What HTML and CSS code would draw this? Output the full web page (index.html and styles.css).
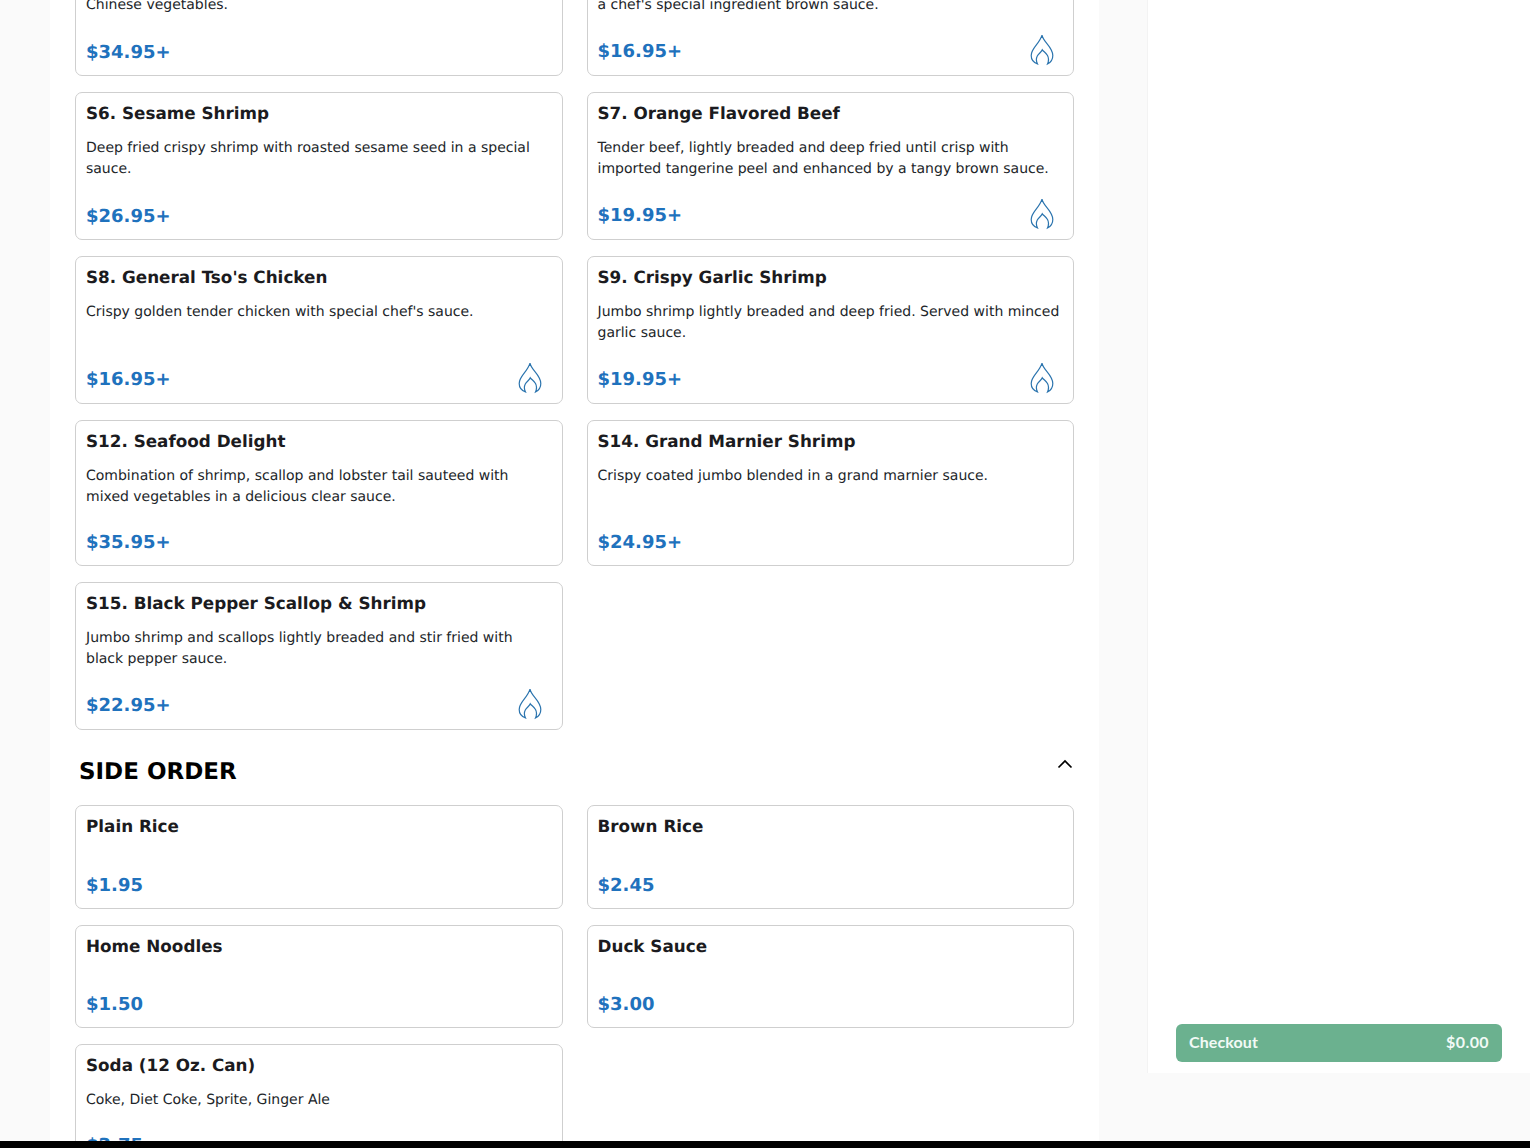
FILE: index.html
```html
<!DOCTYPE html>
<html lang="en">
<head>
<meta charset="utf-8">
<title>Menu</title>
<link rel="stylesheet" href="styles.css">
</head>
<body>
<div class="viewport">
  <main class="menu">
    <div class="menu-inner">
      <section class="grid first-grid">
        <article class="card"><h3 class="name">S4. Seafood Combination</h3><p class="desc">Shrimp, scallop and lobster meat sauteed with fresh<br>Chinese vegetables.</p><div class="price-row"><span class="price">$34.95+</span></div></article>
        <article class="card"><h3 class="name">S5. Sesame Chicken</h3><p class="desc">Crispy chicken with roasted sesame seeds, tossed in<br>a chef's special ingredient brown sauce.</p><div class="price-row"><span class="price">$16.95+</span><svg class="flame" viewBox="0 1 24 32"><use href="#flame"/></svg></div></article>
        <article class="card"><h3 class="name">S6. Sesame Shrimp</h3><p class="desc">Deep fried crispy shrimp with roasted sesame seed in a special sauce.</p><div class="price-row"><span class="price">$26.95+</span></div></article>
        <article class="card"><h3 class="name">S7. Orange Flavored Beef</h3><p class="desc">Tender beef, lightly breaded and deep fried until crisp with imported tangerine peel and enhanced by a tangy brown sauce.</p><div class="price-row"><span class="price">$19.95+</span><svg class="flame" viewBox="0 1 24 32"><use href="#flame"/></svg></div></article>
        <article class="card"><h3 class="name">S8. General Tso's Chicken</h3><p class="desc">Crispy golden tender chicken with special chef's sauce.</p><div class="price-row"><span class="price">$16.95+</span><svg class="flame" viewBox="0 1 24 32"><use href="#flame"/></svg></div></article>
        <article class="card"><h3 class="name">S9. Crispy Garlic Shrimp</h3><p class="desc">Jumbo shrimp lightly breaded and deep fried. Served with minced garlic sauce.</p><div class="price-row"><span class="price">$19.95+</span><svg class="flame" viewBox="0 1 24 32"><use href="#flame"/></svg></div></article>
        <article class="card"><h3 class="name">S12. Seafood Delight</h3><p class="desc">Combination of shrimp, scallop and lobster tail sauteed with mixed vegetables in a delicious clear sauce.</p><div class="price-row"><span class="price">$35.95+</span></div></article>
        <article class="card"><h3 class="name">S14. Grand Marnier Shrimp</h3><p class="desc">Crispy coated jumbo blended in a grand marnier sauce.</p><div class="price-row"><span class="price">$24.95+</span></div></article>
        <article class="card"><h3 class="name">S15. Black Pepper Scallop &amp; Shrimp</h3><p class="desc">Jumbo shrimp and scallops lightly breaded and stir fried with black pepper sauce.</p><div class="price-row"><span class="price">$22.95+</span><svg class="flame" viewBox="0 1 24 32"><use href="#flame"/></svg></div></article>
      </section>
      <header class="section-head">
        <h2 class="section-title">SIDE ORDER</h2>
        <svg class="chevron" viewBox="0 0 16 10"><path d="M1.5 8.5 8 2l6.500 6.500"/></svg>
      </header>
      <section class="grid">
        <article class="card"><h3 class="name">Plain Rice</h3><div class="price-row"><span class="price">$1.95</span></div></article>
        <article class="card"><h3 class="name">Brown Rice</h3><div class="price-row"><span class="price">$2.45</span></div></article>
        <article class="card"><h3 class="name">Home Noodles</h3><div class="price-row"><span class="price">$1.50</span></div></article>
        <article class="card"><h3 class="name">Duck Sauce</h3><div class="price-row"><span class="price">$3.00</span></div></article>
        <article class="card"><h3 class="name">Soda (12 Oz. Can)</h3><p class="desc">Coke, Diet Coke, Sprite, Ginger Ale</p><div class="price-row"><span class="price">$2.75</span></div></article>
      </section>
    </div>
  </main>
  <aside class="cart">
    <button class="checkout" type="button"><span>Checkout</span><span class="amount">$0.00</span></button>
  </aside>
</div>
<div class="bottom-bar"></div>
<svg class="defs" width="0" height="0" aria-hidden="true">
  <symbol id="flame" viewBox="0 0 24 32" overflow="visible">
    <path d="M7.500 30C3.500 28.500 1.200 25.500 1.200 21.500C1.200 14 9.500 10 12 1.200C13 8 22.800 13 22.800 21.500C22.800 25.500 20.800 28.500 17.500 30C18.800 27 18.800 24 17.500 21.500C16 18.800 13.500 17.500 12.300 15.800C11.500 18 8.800 19.500 7.300 22C6 24.500 6 27 7.500 30Z"/>
  </symbol>
</svg>
</body>
</html>
```
FILE: styles.css
```css
* { box-sizing: border-box; }
html, body { margin: 0; padding: 0; height: 1148px; overflow: hidden; }
body {
  background: #fafafa;
  font-family: "DejaVu Sans", sans-serif;
  color: #1b1b20;
  display: flex;
  flex-direction: column;
  text-rendering: geometricPrecision;
}
.viewport {
  height: 1141px;
  padding-left: 50px;
  display: flex;
  align-items: flex-start;
  overflow: hidden;
  flex: none;
}
.menu {
  width: 1049px;
  height: 1141px;
  background: #fff;
  overflow: hidden;
  flex: none;
}
.menu-inner { padding: 0 25px; margin-top: -71.900px; }
.grid {
  display: grid;
  grid-template-columns: 1fr 1fr;
  column-gap: 24px;
  row-gap: 16px;
}
.card {
  background: #fff;
  border: 1px solid #cfcfcf;
  border-radius: 7px;
  padding: 9px 10px 9px;
  display: flex;
  flex-direction: column;
}
.name {
  margin: 0;
  font-size: 16.800px;
  line-height: 22px;
  font-weight: 700;
  color: #1b1b20;
}
.desc {
  margin: 14.100px 0 0;
  font-size: 14px;
  line-height: 21px;
  color: #212529;
}
.price-row {
  margin-top: auto;
  padding-top: 33px;
  display: flex;
  align-items: center;
  justify-content: space-between;
}
.desc + .price-row { padding-top: 18.900px; }
.price {
  font-size: 18px;
  line-height: 26px;
  padding-top: 2.600px;
  font-weight: 700;
  color: #1f72bd;
}
.flame {
  width: 24px;
  height: 32px;
  margin-bottom: -0.900px;
  margin-right: 9px;
  fill: none;
  stroke: #2b74ae;
  stroke-width: 1.200;
  display: block;
}
.card:nth-child(odd) .flame { margin-right: 10px; }
.defs { position: absolute; }
.section-head {
  height: 75px;
  padding: 30px 0 0 4px;
  display: flex;
  justify-content: space-between;
  align-items: flex-start;
}
.section-title {
  margin: 0;
  font-size: 23px;
  line-height: 24px;
  font-weight: 700;
  color: #000;
}
.chevron {
  width: 16px;
  height: 10px;
  margin: -1px 1px 0 0;
  fill: none;
  stroke: #000;
  stroke-width: 1.700;
}
.cart {
  width: 383px;
  height: 1073px;
  margin-left: 48px;
  flex: none;
  background: #fff;
  border-left: 1px solid #f3f3f3;
  padding: 1024px 28px 0 28px;
}
.checkout {
  width: 326px;
  height: 38px;
  border: 0;
  border-radius: 6px;
  background: #6bb18f;
  color: #f2faf6;
  font-family: "Lato", sans-serif;
  font-size: 16px;
  font-weight: 700;
  letter-spacing: 0.1px;
  padding: 0 13px 3px;
  display: flex;
  align-items: center;
  justify-content: space-between;
}
.amount { letter-spacing: 0.4px; }
.bottom-bar { height: 7px; background: #000; flex: none; }
```
